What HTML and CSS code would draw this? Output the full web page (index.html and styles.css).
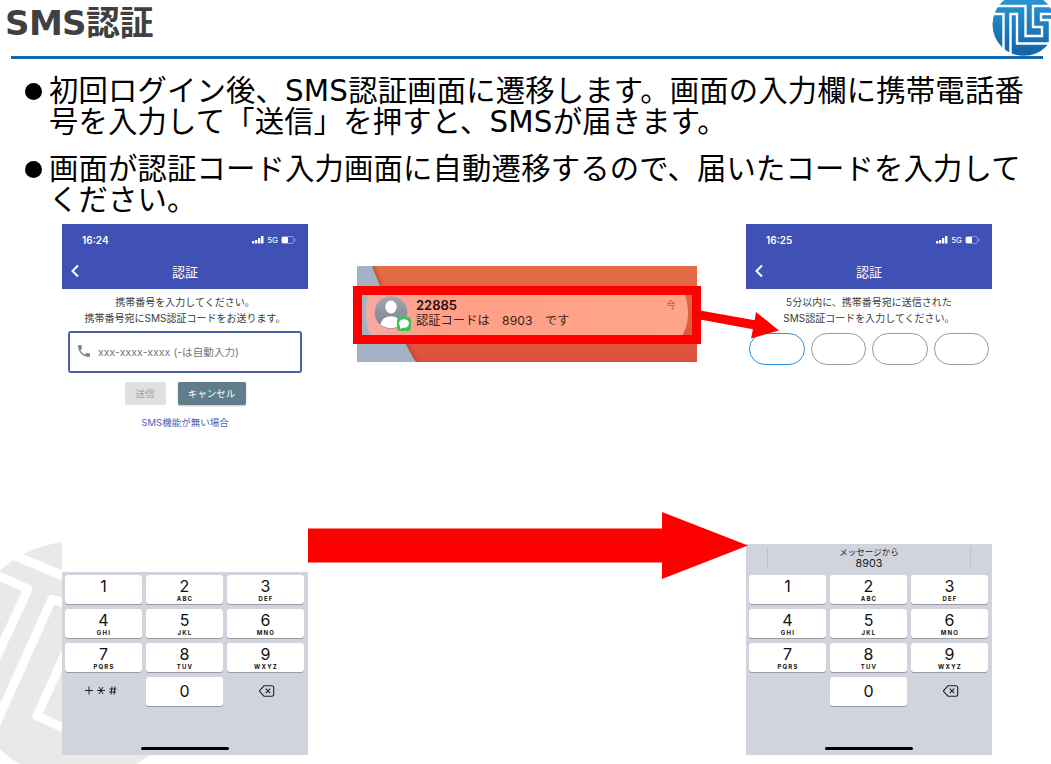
FILE: index.html
```html
<!DOCTYPE html>
<html lang="ja">
<head>
<meta charset="utf-8">
<title>SMS認証</title>
<link rel="stylesheet" href="styles.css">
</head>
<body>
<svg class="watermark" width="160" height="229" viewBox="0 535 160 229" aria-hidden="true">
  <circle cx="78" cy="660" r="119" fill="#e9e9e9"/>
  <g fill="none" stroke="#fff" stroke-width="9" stroke-linejoin="round">
    <path d="M4 551 L70 579"/>
    <path d="M-6 574 L28 589 L-5 660"/>
    <path d="M70 605 L52 599 L-4 724"/>
    <path d="M69 645 L37 716 L70 731"/>
  </g>
</svg>

<header class="header">
  <h1 class="title">SMS認証</h1>
  <svg class="logo" width="60" height="57" viewBox="0 0 60 57" aria-label="TLS">
    <defs><linearGradient id="lg" x1="0" y1="0" x2="0" y2="1"><stop offset="0" stop-color="#2b9ad8"/><stop offset="1" stop-color="#1262a7"/></linearGradient></defs>
    <circle cx="32.800" cy="24.500" r="31.300" fill="url(#lg)"/>
    <g fill="none" stroke="#fff" stroke-width="2.400">
      <path d="M5 6 H34.500 V36 H51 V27 H42 V6 H60"/>
      <path d="M1 14 H12.500 V51"/>
      <path d="M19.500 55 V14 H26 V43.500 H59 V20 H50 V14 H60"/>
    </g>
  </svg>
</header>

<ul class="notes">
  <li>初回ログイン後、SMS認証画面に遷移します。画面の入力欄に携帯電話番<br>号を入力して「送信」を押すと、SMSが届きます。</li>
  <li>画面が認証コード入力画面に自動遷移するので、届いたコードを入力して<br>ください。</li>
</ul>

<main class="stage">
  <section class="phone">
    <div class="appbar">
      <div class="status"><span class="time">16:24</span><span class="net"><svg width="12" height="8" viewBox="0 0 12 8"><path d="M0 5h2.300v2.500H0zM3 4h2.300v3.500H3zM6 2h2.300v5.500H6zM9 0h2.500v7.500H9z" fill="#fff"/></svg><span>5G</span><svg width="15" height="8" viewBox="0 0 15 8"><rect x=".5" y=".5" width="12" height="7" rx="1.800" fill="none" stroke="#8c97d3"/><rect x="1" y="1" width="6" height="6" rx="1" fill="#fff"/><path d="M14 2.500v3" stroke="#8c97d3"/></svg></span></div>
      <div class="nav"><svg class="back" width="10" height="14" viewBox="0 0 10 14"><path d="M8 1.500L2.500 7L8 12.500" fill="none" stroke="#fff" stroke-width="2"/></svg><span>認証</span></div>
    </div>
    <p class="lead">携帯番号を入力してください。<br>携帯番号宛にSMS認証コードをお送ります。</p>
    <div class="field"><svg width="12" height="12" viewBox="3 3 18 18"><path d="M6.620 10.790c1.440 2.830 3.760 5.140 6.590 6.590l2.200-2.200c.27-.27.67-.36 1.020-.24 1.120.37 2.330.57 3.570.57.55 0 1 .45 1 1V20c0 .55-.45 1-1 1-9.390 0-17-7.610-17-17 0-.55.45-1 1-1h3.500c.55 0 1 .45 1 1 0 1.250.2 2.450.57 3.570.11.35.03.74-.25 1.020z" fill="#858585"/></svg><span>xxx-xxxx-xxxx (-は自動入力)</span></div>
    <div class="actions"><span class="btn send">送信</span><span class="btn cancel">キャンセル</span></div>
    <a class="link">SMS機能が無い場合</a>
    <div class="keyboard">
      <div class="keys">
        <span class="key">1</span><span class="key">2<small>ABC</small></span><span class="key">3<small>DEF</small></span>
        <span class="key">4<small>GHI</small></span><span class="key">5<small>JKL</small></span><span class="key">6<small>MNO</small></span>
        <span class="key">7<small>PQRS</small></span><span class="key">8<small>TUV</small></span><span class="key">9<small>WXYZ</small></span>
        <span class="key plain symbols"><svg width="32" height="9" viewBox="0 0 32 9" role="img" aria-label="+*#"><path d="M0 4.500h8M4 .5v8M12 4.500h8M14 1l4 7M18 1l-4 7M24.500 3h7M24 6h7M27 .5l-1 8M30 .5l-1 8" stroke="#222" fill="none"/></svg></span><span class="key zero">0</span><span class="key plain"><svg width="16" height="12" viewBox="0 0 16 12"><path d="M5 .8h8a1.700 1.700 0 0 1 1.700 1.700v7A1.700 1.700 0 0 1 13 11.200H5L.8 6.700a1 1 0 0 1 0-1.400zM6.700 3.700l4.500 4.500M11.200 3.700l-4.500 4.500" fill="none" stroke="#222" stroke-width="1.100"/></svg></span>
      </div>
      <div class="home"></div>
    </div>
  </section>

  <section class="banner">
    <svg class="wallpaper" width="340" height="96" viewBox="0 0 340 96" aria-hidden="true">
      <defs>
        <linearGradient id="wp" x1="0" y1="0" x2="0" y2="1"><stop offset="0" stop-color="#e56d48"/><stop offset="1" stop-color="#dd503e"/></linearGradient>
        <linearGradient id="card"><stop offset="0" stop-color="#f4aaa6"/><stop offset=".2" stop-color="#ff9f87"/><stop offset="1" stop-color="#ffa588"/></linearGradient>
        <linearGradient id="av" x1="0" y1="0" x2="0" y2="1"><stop offset="0" stop-color="#a0a6b2"/><stop offset="1" stop-color="#7b818e"/></linearGradient>
        <filter id="soft"><feGaussianBlur stdDeviation="2"/></filter>
      </defs>
      <rect width="340" height="96" fill="url(#wp)"/>
      <path d="M16 -2Q24 20 31 37Q48 76 61 98H0V-2z" fill="#9d392e" opacity=".7" filter="url(#soft)"/>
      <path d="M0 0H15Q23 21 31 37Q46 76 59 96H0z" fill="#a4b3c4"/>
      <path d="M13 24H325Q331 32 331 48Q331 63 322 74H17Q9 65 9 48Q9 32 13 24z" fill="url(#card)"/>
      <circle cx="34" cy="46.500" r="16.300" fill="url(#av)"/>
      <ellipse cx="34" cy="41" rx="5.700" ry="6.500" fill="#fff"/>
      <path d="M23.500 58.500C25 47.500 43 47.500 44.500 58.500Q34 66 23.500 58.500z" fill="#fff"/>
      <rect x="40" y="51" width="14" height="14" rx="3.500" fill="#35c84a"/>
      <ellipse cx="47" cy="57.500" rx="5" ry="4.200" fill="#fff"/><path d="M43 59l0 4 4-2z" fill="#fff"/>
    </svg>
    <div class="message"><b>22885</b><span class="now">今</span><p>認証コードは　8903　です</p></div>
    <div class="highlight"></div>
  </section>

  <section class="phone">
    <div class="appbar">
      <div class="status"><span class="time">16:25</span><span class="net"><svg width="12" height="8" viewBox="0 0 12 8"><path d="M0 5h2.300v2.500H0zM3 4h2.300v3.500H3zM6 2h2.300v5.500H6zM9 0h2.500v7.500H9z" fill="#fff"/></svg><span>5G</span><svg width="15" height="8" viewBox="0 0 15 8"><rect x=".5" y=".5" width="12" height="7" rx="1.800" fill="none" stroke="#8c97d3"/><rect x="1" y="1" width="6" height="6" rx="1" fill="#fff"/><path d="M14 2.500v3" stroke="#8c97d3"/></svg></span></div>
      <div class="nav"><svg class="back" width="10" height="14" viewBox="0 0 10 14"><path d="M8 1.500L2.500 7L8 12.500" fill="none" stroke="#fff" stroke-width="2"/></svg><span>認証</span></div>
    </div>
    <p class="lead">5分以内に、携帯番号宛に送信された<br>SMS認証コードを入力してください。</p>
    <div class="code"><span class="active"></span><span></span><span></span><span></span></div>
    <div class="keyboard">
      <div class="suggest"><div>メッセージから<b>8903</b></div></div>
      <div class="keys">
        <span class="key">1</span><span class="key">2<small>ABC</small></span><span class="key">3<small>DEF</small></span>
        <span class="key">4<small>GHI</small></span><span class="key">5<small>JKL</small></span><span class="key">6<small>MNO</small></span>
        <span class="key">7<small>PQRS</small></span><span class="key">8<small>TUV</small></span><span class="key">9<small>WXYZ</small></span>
        <span class="key plain"></span><span class="key zero">0</span><span class="key plain"><svg width="16" height="12" viewBox="0 0 16 12"><path d="M5 .8h8a1.700 1.700 0 0 1 1.700 1.700v7A1.700 1.700 0 0 1 13 11.200H5L.8 6.700a1 1 0 0 1 0-1.400zM6.700 3.700l4.500 4.500M11.200 3.700l-4.500 4.500" fill="none" stroke="#222" stroke-width="1.100"/></svg></span>
      </div>
      <div class="home"></div>
    </div>
  </section>

  <svg class="arrows" width="1051" height="540" viewBox="0 224 1051 540" aria-hidden="true">
    <path d="M308 528.500H662V512L748 545.500L662 579V562.500H308z" fill="#f00"/>
    <path d="M700 310.500L754.700 320.300L756 312L779 330.500L751 338.500L753 329.300L700 319.500z" fill="#f00"/>
  </svg>
</main>
</body>
</html>
```

FILE: styles.css
```css
* { box-sizing: border-box; }
body {
  margin: 0;
  width: 1051px;
  height: 764px;
  overflow: hidden;
  position: relative;
  background: #fff;
  color: #000;
  font-family: "DejaVu Sans", "Noto Sans CJK JP", sans-serif;
}
svg { display: block; flex: none; }
p { margin: 0; }
.watermark { position: absolute; left: 0; bottom: 0; }

.header {
  display: flex;
  justify-content: space-between;
  margin-left: 11px;
  width: 1040px;
  height: 59px;
}
.header::after {
  content: "";
  position: absolute;
  left: 11px;
  top: 56px;
  width: 1032px;
  height: 3px;
  background: #1469ad;
}
.title {
  margin: 0 0 0 -6px;
  font-size: 34px;
  line-height: 47px;
  letter-spacing: -.6px;
  color: #404040;
  white-space: nowrap;
}

.notes {
  margin: 0;
  padding: 17px 0 0 49px;
  height: 165px;
  list-style: none;
  font-size: 29.33px;
  line-height: 31px;
  letter-spacing: .18px;
  white-space: nowrap;
}
.notes li { position: relative; margin-bottom: 16px; }
.notes li::before {
  content: "";
  position: absolute;
  left: -24px;
  top: 7px;
  width: 17px;
  height: 17px;
  border-radius: 50%;
  background: #000;
}

.stage {
  position: relative;
  display: flex;
  align-items: flex-start;
  padding-left: 62px;
  height: 540px;
  font-family: Inter, "Noto Sans CJK JP", sans-serif;
}
.arrows { position: absolute; left: 0; top: 0; }

.phone {
  display: flex;
  flex-direction: column;
  align-items: center;
  width: 246px;
  height: 531px;
  background: #fff;
}
.appbar { width: 246px; height: 65px; background: #3f51b5; color: #fff; }
.status {
  display: flex;
  justify-content: space-between;
  align-items: center;
  height: 31px;
  padding: 0 12px 0 20px;
}
.time { font-size: 10px; font-weight: 600; }
.net { display: flex; align-items: center; gap: 3px; font-size: 8px; }
.nav {
  position: relative;
  display: flex;
  justify-content: center;
  align-items: center;
  height: 33px;
  font-size: 13px;
}
.back { position: absolute; left: 8px; top: 9px; }
.lead {
  margin-top: 6px;
  font-size: 10px;
  line-height: 15.500px;
  text-align: center;
  color: #3c3c3c;
  white-space: nowrap;
}
.field {
  display: flex;
  align-items: center;
  gap: 8px;
  width: 234px;
  height: 42px;
  margin-top: 5px;
  padding: 0 0 2px 8px;
  border: 2px solid #4f5cac;
  border-radius: 3px;
  font-size: 10.600px;
  color: #777;
  white-space: nowrap;
}
.actions { display: flex; gap: 12px; margin-top: 9px; }
.btn {
  display: flex;
  align-items: center;
  justify-content: center;
  height: 23px;
  padding-bottom: 1px;
  border-radius: 2px;
  font-size: 9.500px;
  box-shadow: 0 1px 2px rgba(0, 0, 0, .25);
}
.send { width: 41px; background: #e0e0e0; color: #a2a2a2; box-shadow: none; }
.cancel { width: 68px; background: #607d8b; color: #fff; }
.link { margin-top: 10px; font-size: 9.500px; line-height: 15px; color: #4c5bb9; }

.code { display: flex; gap: 6px; margin-top: 7px; }
.code span { width: 55.500px; height: 32px; border: 1px solid #999; border-radius: 16px; }
.code .active { border-color: #2b91e0; }

.keyboard {
  display: flex;
  flex-direction: column;
  align-items: center;
  width: 246px;
  margin-top: auto;
  background: #d1d4dc;
}
.suggest {
  display: flex;
  justify-content: center;
  width: 204px;
  height: 22px;
  margin: 3px 0;
  border: solid #bcc0c9;
  border-width: 0 1px;
  text-align: center;
  font-size: 8.500px;
  line-height: 11px;
  color: #222;
}
.suggest b { display: block; font-size: 10.800px; font-weight: 400; line-height: 12px; }
.keys {
  display: grid;
  grid-template-columns: repeat(3, 77px);
  grid-auto-rows: 29px;
  gap: 5px 4px;
  height: 172px;
  margin-right: 1px;
  padding-top: 3px;
}
.key {
  display: flex;
  flex-direction: column;
  align-items: center;
  padding-top: 3px;
  border-radius: 3px;
  background: #fff;
  box-shadow: 0 1px 0 #989ba2;
  font-size: 16px;
  line-height: 17px;
  color: #111;
}
.key small { font-size: 6px; font-weight: 700; line-height: 7px; letter-spacing: 1.200px; margin-right: -1px; }
.plain { background: none; box-shadow: none; padding: 0 0 2px 3px; justify-content: center; }
.symbols { padding-left: 0; padding-right: 5px; padding-bottom: 3px; }
.zero { padding-top: 6px; }
.home { width: 88px; height: 3px; margin: 3px 0 5px; border-radius: 2px; background: #000; }

.banner {
  position: relative;
  width: 340px;
  height: 96px;
  margin: 42px 49px 0;
}
.wallpaper { position: absolute; left: 0; top: 0; }
.message {
  position: relative;
  display: flex;
  flex-wrap: wrap;
  justify-content: space-between;
  padding: 31px 21px 0 59px;
  font-size: 12.200px;
  line-height: 16px;
  color: #40201c;
}
.message b { font-size: 13px; font-weight: 600; color: #250e0b; }
.message p { width: 100%; white-space: nowrap; letter-spacing: .1px; }
.now { font-size: 10px; color: #cf4c40; }
.highlight {
  position: absolute;
  left: -4px;
  top: 20px;
  width: 348px;
  height: 58px;
  border: 9px solid #f00;
}
```
